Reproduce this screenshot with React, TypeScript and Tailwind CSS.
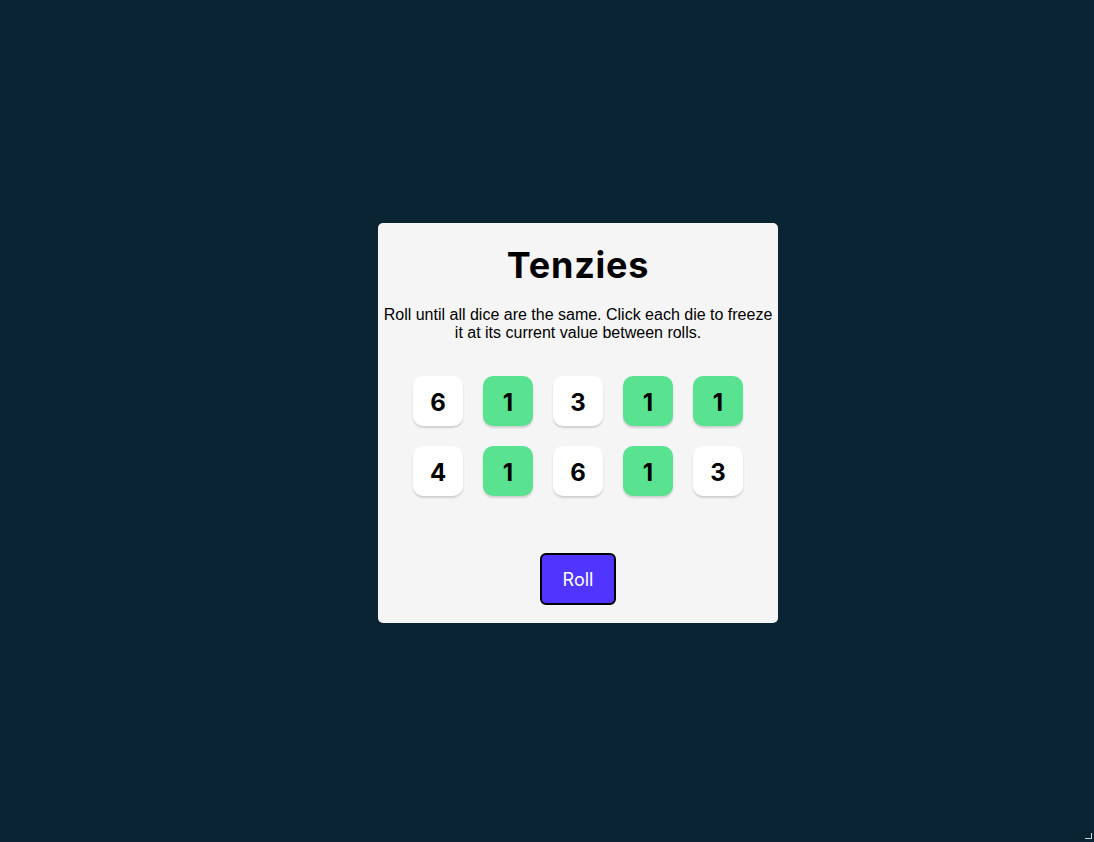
import React, { useState } from "react";

type Die = { value: number; held: boolean };

const startingDice: Die[] = [
  { value: 6, held: false },
  { value: 1, held: true },
  { value: 3, held: false },
  { value: 1, held: true },
  { value: 1, held: true },
  { value: 4, held: false },
  { value: 1, held: true },
  { value: 6, held: false },
  { value: 1, held: true },
  { value: 3, held: false },
];

const DieFace = ({ die, onHold }: { die: Die; onHold: () => void }) => {
  return (
    <button
      onClick={onHold}
      className={
        die.held
          ? "w-[50px] h-[50px] rounded-[10px] bg-[#59E391] shadow-[0_2px_2px_rgba(0,0,0,0.15)] flex items-center justify-center pt-[3px] text-[24px] font-bold text-black"
          : "w-[50px] h-[50px] rounded-[10px] bg-white shadow-[0_2px_2px_rgba(0,0,0,0.15)] flex items-center justify-center pt-[3px] text-[24px] font-bold text-black"
      }
    >
      {die.value}
    </button>
  );
};

export default function App() {
  const [dice, setDice] = useState<Die[]>(startingDice);

  const hold = (idx: number) => {
    setDice((prev) => prev.map((d, i) => (i === idx ? { ...d, held: !d.held } : d)));
  };

  const roll = () => {
    setDice((prev) =>
      prev.map((d) => (d.held ? d : { ...d, value: Math.ceil(Math.random() * 6) }))
    );
  };

  return (
    <div className="relative min-h-[842px] bg-[#0B2434] flex items-center justify-center pl-[62px] pt-[4px] font-['Inter',sans-serif]">
      <main className="w-[400px] h-[400px] bg-[#F5F5F5] rounded-[5px] flex flex-col items-center pt-[18px]">
        <h1 className="text-[36px] leading-[48px] font-bold tracking-[0.8px] text-black">Tenzies</h1>
        <p className="mt-[17px] px-[5px] text-center text-[16px] leading-[18px] text-black font-['Liberation_Sans',Arial,sans-serif]">
          Roll until all dice are the same. Click each die to freeze it at its current value
          between rolls.
        </p>
        <div className="mt-[34px] grid grid-cols-5 gap-[20px]">
          {dice.map((d, i) => (
            <DieFace key={i} die={d} onHold={() => hold(i)} />
          ))}
        </div>
        <button
          onClick={roll}
          className="mt-[57px] w-[76px] h-[52px] bg-[#5035FF] border-2 border-black rounded-[6px] text-white text-[18px] font-normal"
        >
          Roll
        </button>
      </main>
      {/* window resize grip in the corner */}
      <div className="absolute right-[2px] bottom-[3px] w-[7px] h-[6px] border-r border-b border-white/80" />
    </div>
  );
}
